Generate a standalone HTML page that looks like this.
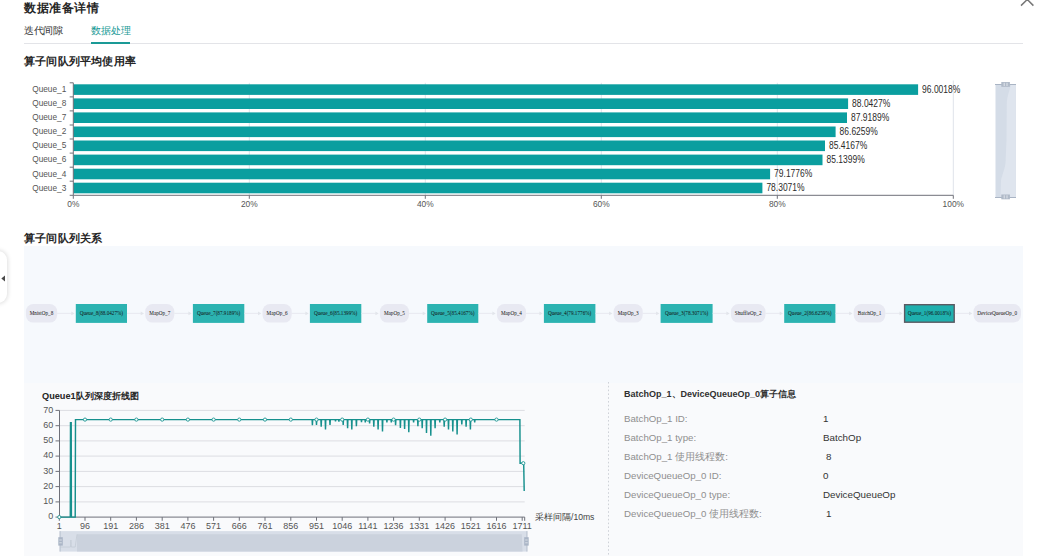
<!DOCTYPE html>
<html><head><meta charset="utf-8">
<style>
html,body{margin:0;padding:0;}
body{width:1049px;height:556px;overflow:hidden;background:#fff;position:relative;font-family:"Liberation Sans",sans-serif;}
.t{position:absolute;white-space:nowrap;line-height:1;}
svg{position:absolute;left:0;top:0;}
svg text{font-family:"Liberation Sans",sans-serif;}
.bl{font-size:10px;fill:#2b2b2b;}
.yl{font-size:9.2px;fill:#555;}
.xl{font-size:8.4px;fill:#555;}
.ll{font-size:9px;fill:#555;}
.nt{font-family:"Liberation Serif",serif !important;font-size:5.2px;fill:#111;}
.row{font-size:9.7px;color:#8f8f8f;}
.val{font-size:9.8px;color:#333;}
</style></head><body>
<div class="t" style="left:24px;top:1.8px;font-size:12px;letter-spacing:0.6px;font-weight:bold;color:#262626;">数据准备详情</div>
<div class="t" style="left:24px;top:25.7px;font-size:10px;letter-spacing:-0.3px;color:#333;">迭代间隙</div>
<div class="t" style="left:91px;top:25.7px;font-size:10px;letter-spacing:0px;color:#1a9a96;">数据处理</div>
<div style="position:absolute;left:24px;top:43px;width:999px;height:1px;background:#e3e4e8;"></div>
<div style="position:absolute;left:91px;top:42px;width:39px;height:2px;background:#1a9a96;"></div>
<div class="t" style="left:24px;top:56px;font-size:11.3px;letter-spacing:0.2px;font-weight:bold;color:#262626;">算子间队列平均使用率</div>
<div class="t" style="left:24px;top:233px;font-size:11.3px;letter-spacing:0.2px;font-weight:bold;color:#262626;">算子间队列关系</div>
<div style="position:absolute;left:23.6px;top:245.8px;width:999.6px;height:137.2px;background:#f6f9fd;"></div>
<div style="position:absolute;left:23.6px;top:383px;width:999.6px;height:173px;background:#f9fafc;"></div>
<div style="position:absolute;left:-12px;top:251px;width:18.5px;height:52px;background:#fff;border-radius:9px;box-shadow:0 0 4px 1px rgba(0,0,0,0.13);"></div>

<div class="t" style="left:42px;top:392px;font-size:9.2px;font-weight:bold;color:#262626;">Queue1队列深度折线图</div>
<div class="t" style="left:624px;top:389.5px;font-size:9px;font-weight:bold;color:#303030;">BatchOp_1、DeviceQueueOp_0算子信息</div>
<div class="t row" style="left:624px;top:414px;">BatchOp_1 ID:</div>
<div class="t row" style="left:624px;top:433px;">BatchOp_1 type:</div>
<div class="t row" style="left:624px;top:452px;">BatchOp_1 使用线程数:</div>
<div class="t row" style="left:624px;top:471px;">DeviceQueueOp_0 ID:</div>
<div class="t row" style="left:624px;top:490px;">DeviceQueueOp_0 type:</div>
<div class="t row" style="left:624px;top:509px;">DeviceQueueOp_0 使用线程数:</div>
<div class="t val" style="left:823px;top:414px;">1</div>
<div class="t val" style="left:823px;top:433px;">BatchOp</div>
<div class="t val" style="left:826px;top:452px;">8</div>
<div class="t val" style="left:823px;top:471px;">0</div>
<div class="t val" style="left:823px;top:490px;">DeviceQueueOp</div>
<div class="t val" style="left:826px;top:509px;">1</div>
<div class="t" style="left:535px;top:512.5px;font-size:8.6px;color:#444;">采样间隔/10ms</div>
<svg width="1049" height="556" viewBox="0 0 1049 556">
<line x1="608.5" y1="382" x2="608.5" y2="556" stroke="#cfd2d8" stroke-width="1" stroke-dasharray="1.6 2.2"/>
<path d="M1021,5.6 L1027.3,-0.5 L1033.4,5.6" fill="none" stroke="#777" stroke-width="1.5"/>
<path d="M1.3,278.5 L5,275.6 L5,281.4 Z" fill="#4a4a4a"/>
<line x1="249.3" y1="82.8" x2="249.3" y2="195.1" stroke="#dfe3ea" stroke-width="1"/>
<line x1="425.3" y1="82.8" x2="425.3" y2="195.1" stroke="#dfe3ea" stroke-width="1"/>
<line x1="601.3" y1="82.8" x2="601.3" y2="195.1" stroke="#dfe3ea" stroke-width="1"/>
<line x1="777.3" y1="82.8" x2="777.3" y2="195.1" stroke="#dfe3ea" stroke-width="1"/>
<line x1="953.3" y1="80.5" x2="953.3" y2="195.1" stroke="#dfe3ea" stroke-width="1"/>
<rect x="73.3" y="84.3" width="844.8" height="10.6" fill="#0a9e9f"/>
<text x="922.1" y="92.6" class="bl" textLength="38.2" lengthAdjust="spacingAndGlyphs">96.0018%</text>
<text x="32.2" y="92.1" class="yl" textLength="34.1" lengthAdjust="spacingAndGlyphs">Queue_1</text>
<rect x="73.3" y="98.4" width="774.8" height="10.6" fill="#0a9e9f"/>
<text x="852.1" y="106.7" class="bl" textLength="38.2" lengthAdjust="spacingAndGlyphs">88.0427%</text>
<text x="32.2" y="106.2" class="yl" textLength="34.1" lengthAdjust="spacingAndGlyphs">Queue_8</text>
<rect x="73.3" y="112.4" width="773.7" height="10.6" fill="#0a9e9f"/>
<text x="851.0" y="120.7" class="bl" textLength="38.2" lengthAdjust="spacingAndGlyphs">87.9189%</text>
<text x="32.2" y="120.2" class="yl" textLength="34.1" lengthAdjust="spacingAndGlyphs">Queue_7</text>
<rect x="73.3" y="126.5" width="762.3" height="10.6" fill="#0a9e9f"/>
<text x="839.6" y="134.8" class="bl" textLength="38.2" lengthAdjust="spacingAndGlyphs">86.6259%</text>
<text x="32.2" y="134.3" class="yl" textLength="34.1" lengthAdjust="spacingAndGlyphs">Queue_2</text>
<rect x="73.3" y="140.5" width="751.7" height="10.6" fill="#0a9e9f"/>
<text x="829.0" y="148.8" class="bl" textLength="38.2" lengthAdjust="spacingAndGlyphs">85.4167%</text>
<text x="32.2" y="148.3" class="yl" textLength="34.1" lengthAdjust="spacingAndGlyphs">Queue_5</text>
<rect x="73.3" y="154.6" width="749.2" height="10.6" fill="#0a9e9f"/>
<text x="826.5" y="162.9" class="bl" textLength="38.2" lengthAdjust="spacingAndGlyphs">85.1399%</text>
<text x="32.2" y="162.4" class="yl" textLength="34.1" lengthAdjust="spacingAndGlyphs">Queue_6</text>
<rect x="73.3" y="168.7" width="696.8" height="10.6" fill="#0a9e9f"/>
<text x="774.1" y="177.0" class="bl" textLength="38.2" lengthAdjust="spacingAndGlyphs">79.1776%</text>
<text x="32.2" y="176.5" class="yl" textLength="34.1" lengthAdjust="spacingAndGlyphs">Queue_4</text>
<rect x="73.3" y="182.7" width="689.1" height="10.6" fill="#0a9e9f"/>
<text x="766.4" y="191.0" class="bl" textLength="38.2" lengthAdjust="spacingAndGlyphs">78.3071%</text>
<text x="32.2" y="190.5" class="yl" textLength="34.1" lengthAdjust="spacingAndGlyphs">Queue_3</text>
<line x1="69.7" y1="82.8" x2="73.3" y2="82.8" stroke="#6e7079" stroke-width="1"/>
<line x1="69.7" y1="96.9" x2="73.3" y2="96.9" stroke="#6e7079" stroke-width="1"/>
<line x1="69.7" y1="110.9" x2="73.3" y2="110.9" stroke="#6e7079" stroke-width="1"/>
<line x1="69.7" y1="125.0" x2="73.3" y2="125.0" stroke="#6e7079" stroke-width="1"/>
<line x1="69.7" y1="139.0" x2="73.3" y2="139.0" stroke="#6e7079" stroke-width="1"/>
<line x1="69.7" y1="153.1" x2="73.3" y2="153.1" stroke="#6e7079" stroke-width="1"/>
<line x1="69.7" y1="167.2" x2="73.3" y2="167.2" stroke="#6e7079" stroke-width="1"/>
<line x1="69.7" y1="181.2" x2="73.3" y2="181.2" stroke="#6e7079" stroke-width="1"/>
<line x1="69.7" y1="195.3" x2="73.3" y2="195.3" stroke="#6e7079" stroke-width="1"/>
<line x1="73.3" y1="195.3" x2="73.3" y2="198.8" stroke="#6e7079" stroke-width="1"/>
<text x="73.3" y="207.3" class="xl" text-anchor="middle">0%</text>
<line x1="249.3" y1="195.3" x2="249.3" y2="198.8" stroke="#6e7079" stroke-width="1"/>
<text x="249.3" y="207.3" class="xl" text-anchor="middle">20%</text>
<line x1="425.3" y1="195.3" x2="425.3" y2="198.8" stroke="#6e7079" stroke-width="1"/>
<text x="425.3" y="207.3" class="xl" text-anchor="middle">40%</text>
<line x1="601.3" y1="195.3" x2="601.3" y2="198.8" stroke="#6e7079" stroke-width="1"/>
<text x="601.3" y="207.3" class="xl" text-anchor="middle">60%</text>
<line x1="777.3" y1="195.3" x2="777.3" y2="198.8" stroke="#6e7079" stroke-width="1"/>
<text x="777.3" y="207.3" class="xl" text-anchor="middle">80%</text>
<line x1="953.3" y1="195.3" x2="953.3" y2="198.8" stroke="#6e7079" stroke-width="1"/>
<text x="953.3" y="207.3" class="xl" text-anchor="middle">100%</text>
<line x1="73.3" y1="82.8" x2="73.3" y2="195.3" stroke="#6e7079" stroke-width="1"/>
<line x1="73.3" y1="195.3" x2="953.3" y2="195.3" stroke="#6e7079" stroke-width="1"/>
<rect x="995.5" y="84.5" width="20.4" height="113" fill="#d4dce7"/>
<path d="M1011,84.5 L1015.9,84.5 L1015.9,197.5 L1000.5,197.5 L1001,180 C1003,172 1005.5,168 1005.7,160 L1006.5,140 L1006.8,104 C1007,95 1010,90 1011,84.5 Z" fill="#dfe5ee"/>
<line x1="995" y1="84.5" x2="1016" y2="84.5" stroke="#a9b4c4" stroke-width="1"/>
<line x1="995" y1="197.5" x2="1016" y2="197.5" stroke="#a9b4c4" stroke-width="1"/>
<rect x="1001.3" y="82" width="8.6" height="4.8" fill="#b0bac8"/>
<line x1="1004.2" y1="82.8" x2="1004.2" y2="86" stroke="#e6eaf0" stroke-width="0.9"/>
<line x1="1007" y1="82.8" x2="1007" y2="86" stroke="#e6eaf0" stroke-width="0.9"/>
<rect x="1001.3" y="194.5" width="8.6" height="4.8" fill="#b0bac8"/>
<line x1="1004.2" y1="195.3" x2="1004.2" y2="198.5" stroke="#e6eaf0" stroke-width="0.9"/>
<line x1="1007" y1="195.3" x2="1007" y2="198.5" stroke="#e6eaf0" stroke-width="0.9"/>
<rect x="25.9" y="304" width="31.3" height="18.6" rx="7.5" fill="#e8e9f2"/>
<text x="41.5" y="314.9" class="nt" text-anchor="middle">MnistOp_8</text>
<line x1="57.2" y1="313.4" x2="72.8" y2="313.4" stroke="#e4e6ec" stroke-width="0.8"/>
<path d="M71.3,311.6 L74.6,313.4 L71.3,315.2 Z" fill="#e2e5eb"/>
<rect x="75.8" y="304" width="51.2" height="18.9" fill="#2cb3b1"/>
<text x="101.4" y="314.6" class="nt" text-anchor="middle">Queue_8(88.0427%)</text>
<line x1="127.0" y1="313.4" x2="142.2" y2="313.4" stroke="#e4e6ec" stroke-width="0.8"/>
<path d="M140.7,311.6 L144.0,313.4 L140.7,315.2 Z" fill="#e2e5eb"/>
<rect x="145.2" y="304" width="29.1" height="18.6" rx="7.5" fill="#e8e9f2"/>
<text x="159.8" y="314.9" class="nt" text-anchor="middle">MapOp_7</text>
<line x1="174.3" y1="313.4" x2="189.9" y2="313.4" stroke="#e4e6ec" stroke-width="0.8"/>
<path d="M188.4,311.6 L191.7,313.4 L188.4,315.2 Z" fill="#e2e5eb"/>
<rect x="192.9" y="304" width="51.4" height="18.9" fill="#2cb3b1"/>
<text x="218.6" y="314.6" class="nt" text-anchor="middle">Queue_7(87.9189%)</text>
<line x1="244.3" y1="313.4" x2="259.5" y2="313.4" stroke="#e4e6ec" stroke-width="0.8"/>
<path d="M258.0,311.6 L261.3,313.4 L258.0,315.2 Z" fill="#e2e5eb"/>
<rect x="262.5" y="304" width="29.2" height="18.6" rx="7.5" fill="#e8e9f2"/>
<text x="277.1" y="314.9" class="nt" text-anchor="middle">MapOp_6</text>
<line x1="291.7" y1="313.4" x2="306.9" y2="313.4" stroke="#e4e6ec" stroke-width="0.8"/>
<path d="M305.4,311.6 L308.7,313.4 L305.4,315.2 Z" fill="#e2e5eb"/>
<rect x="309.9" y="304" width="51.4" height="18.9" fill="#2cb3b1"/>
<text x="335.6" y="314.6" class="nt" text-anchor="middle">Queue_6(85.1399%)</text>
<line x1="361.3" y1="313.4" x2="376.9" y2="313.4" stroke="#e4e6ec" stroke-width="0.8"/>
<path d="M375.4,311.6 L378.7,313.4 L375.4,315.2 Z" fill="#e2e5eb"/>
<rect x="379.9" y="304" width="29.1" height="18.6" rx="7.5" fill="#e8e9f2"/>
<text x="394.4" y="314.9" class="nt" text-anchor="middle">MapOp_5</text>
<line x1="409.0" y1="313.4" x2="424.2" y2="313.4" stroke="#e4e6ec" stroke-width="0.8"/>
<path d="M422.7,311.6 L426.0,313.4 L422.7,315.2 Z" fill="#e2e5eb"/>
<rect x="427.2" y="304" width="51.1" height="18.9" fill="#2cb3b1"/>
<text x="452.8" y="314.6" class="nt" text-anchor="middle">Queue_5(85.4167%)</text>
<line x1="478.3" y1="313.4" x2="493.9" y2="313.4" stroke="#e4e6ec" stroke-width="0.8"/>
<path d="M492.4,311.6 L495.7,313.4 L492.4,315.2 Z" fill="#e2e5eb"/>
<rect x="496.9" y="304" width="29.1" height="18.6" rx="7.5" fill="#e8e9f2"/>
<text x="511.4" y="314.9" class="nt" text-anchor="middle">MapOp_4</text>
<line x1="526.0" y1="313.4" x2="540.9" y2="313.4" stroke="#e4e6ec" stroke-width="0.8"/>
<path d="M539.4,311.6 L542.7,313.4 L539.4,315.2 Z" fill="#e2e5eb"/>
<rect x="543.9" y="304" width="51.5" height="18.9" fill="#2cb3b1"/>
<text x="569.6" y="314.6" class="nt" text-anchor="middle">Queue_4(79.1776%)</text>
<line x1="595.4" y1="313.4" x2="610.6" y2="313.4" stroke="#e4e6ec" stroke-width="0.8"/>
<path d="M609.1,311.6 L612.4,313.4 L609.1,315.2 Z" fill="#e2e5eb"/>
<rect x="613.6" y="304" width="29.1" height="18.6" rx="7.5" fill="#e8e9f2"/>
<text x="628.2" y="314.9" class="nt" text-anchor="middle">MapOp_3</text>
<line x1="642.7" y1="313.4" x2="657.6" y2="313.4" stroke="#e4e6ec" stroke-width="0.8"/>
<path d="M656.1,311.6 L659.4,313.4 L656.1,315.2 Z" fill="#e2e5eb"/>
<rect x="660.6" y="304" width="52.0" height="18.9" fill="#2cb3b1"/>
<text x="686.6" y="314.6" class="nt" text-anchor="middle">Queue_3(78.3071%)</text>
<line x1="712.6" y1="313.4" x2="727.9" y2="313.4" stroke="#e4e6ec" stroke-width="0.8"/>
<path d="M726.4,311.6 L729.7,313.4 L726.4,315.2 Z" fill="#e2e5eb"/>
<rect x="730.9" y="304" width="34.6" height="18.6" rx="7.5" fill="#e8e9f2"/>
<text x="748.2" y="314.9" class="nt" text-anchor="middle">ShuffleOp_2</text>
<line x1="765.5" y1="313.4" x2="781.2" y2="313.4" stroke="#e4e6ec" stroke-width="0.8"/>
<path d="M779.7,311.6 L783.0,313.4 L779.7,315.2 Z" fill="#e2e5eb"/>
<rect x="784.2" y="304" width="51.2" height="18.9" fill="#2cb3b1"/>
<text x="809.8" y="314.6" class="nt" text-anchor="middle">Queue_2(86.6259%)</text>
<line x1="835.4" y1="313.4" x2="850.7" y2="313.4" stroke="#e4e6ec" stroke-width="0.8"/>
<path d="M849.2,311.6 L852.5,313.4 L849.2,315.2 Z" fill="#e2e5eb"/>
<rect x="853.7" y="304" width="31.6" height="18.6" rx="7.5" fill="#e8e9f2"/>
<text x="869.5" y="314.9" class="nt" text-anchor="middle">BatchOp_1</text>
<line x1="885.3" y1="313.4" x2="900.9" y2="313.4" stroke="#e4e6ec" stroke-width="0.8"/>
<path d="M899.4,311.6 L902.7,313.4 L899.4,315.2 Z" fill="#e2e5eb"/>
<rect x="904.6" y="304.7" width="49.6" height="17.5" fill="#1fb0ae" stroke="#5b5a62" stroke-width="1.4"/>
<text x="929.4" y="314.6" class="nt" text-anchor="middle">Queue_1(96.0018%)</text>
<line x1="954.9" y1="313.4" x2="970.5" y2="313.4" stroke="#e4e6ec" stroke-width="0.8"/>
<path d="M969.0,311.6 L972.3,313.4 L969.0,315.2 Z" fill="#e2e5eb"/>
<rect x="973.5" y="304" width="47.5" height="18.6" rx="7.5" fill="#e8e9f2"/>
<text x="997.2" y="314.9" class="nt" text-anchor="middle">DeviceQueueOp_0</text>
<line x1="55.5" y1="517.1" x2="59.5" y2="517.1" stroke="#6e7079" stroke-width="1"/>
<text x="53.3" y="519.3" class="ll" text-anchor="end">0</text>
<line x1="59.5" y1="501.9" x2="524.7" y2="501.9" stroke="#dcdde2" stroke-width="1"/>
<line x1="55.5" y1="501.9" x2="59.5" y2="501.9" stroke="#6e7079" stroke-width="1"/>
<text x="53.3" y="504.1" class="ll" text-anchor="end">10</text>
<line x1="59.5" y1="486.6" x2="524.7" y2="486.6" stroke="#dcdde2" stroke-width="1"/>
<line x1="55.5" y1="486.6" x2="59.5" y2="486.6" stroke="#6e7079" stroke-width="1"/>
<text x="53.3" y="488.8" class="ll" text-anchor="end">20</text>
<line x1="59.5" y1="471.4" x2="524.7" y2="471.4" stroke="#dcdde2" stroke-width="1"/>
<line x1="55.5" y1="471.4" x2="59.5" y2="471.4" stroke="#6e7079" stroke-width="1"/>
<text x="53.3" y="473.6" class="ll" text-anchor="end">30</text>
<line x1="59.5" y1="456.1" x2="524.7" y2="456.1" stroke="#dcdde2" stroke-width="1"/>
<line x1="55.5" y1="456.1" x2="59.5" y2="456.1" stroke="#6e7079" stroke-width="1"/>
<text x="53.3" y="458.3" class="ll" text-anchor="end">40</text>
<line x1="59.5" y1="440.9" x2="524.7" y2="440.9" stroke="#dcdde2" stroke-width="1"/>
<line x1="55.5" y1="440.9" x2="59.5" y2="440.9" stroke="#6e7079" stroke-width="1"/>
<text x="53.3" y="443.1" class="ll" text-anchor="end">50</text>
<line x1="59.5" y1="425.7" x2="524.7" y2="425.7" stroke="#dcdde2" stroke-width="1"/>
<line x1="55.5" y1="425.7" x2="59.5" y2="425.7" stroke="#6e7079" stroke-width="1"/>
<text x="53.3" y="427.9" class="ll" text-anchor="end">60</text>
<line x1="59.5" y1="410.4" x2="524.7" y2="410.4" stroke="#dcdde2" stroke-width="1"/>
<line x1="55.5" y1="410.4" x2="59.5" y2="410.4" stroke="#6e7079" stroke-width="1"/>
<text x="53.3" y="412.6" class="ll" text-anchor="end">70</text>
<line x1="59.3" y1="517.1" x2="59.3" y2="520.8" stroke="#6e7079" stroke-width="1"/>
<text x="59.3" y="528.8" class="ll" text-anchor="middle">1</text>
<line x1="85.0" y1="517.1" x2="85.0" y2="520.8" stroke="#6e7079" stroke-width="1"/>
<text x="85.0" y="528.8" class="ll" text-anchor="middle">96</text>
<line x1="110.7" y1="517.1" x2="110.7" y2="520.8" stroke="#6e7079" stroke-width="1"/>
<text x="110.7" y="528.8" class="ll" text-anchor="middle">191</text>
<line x1="136.4" y1="517.1" x2="136.4" y2="520.8" stroke="#6e7079" stroke-width="1"/>
<text x="136.4" y="528.8" class="ll" text-anchor="middle">286</text>
<line x1="162.2" y1="517.1" x2="162.2" y2="520.8" stroke="#6e7079" stroke-width="1"/>
<text x="162.2" y="528.8" class="ll" text-anchor="middle">381</text>
<line x1="187.9" y1="517.1" x2="187.9" y2="520.8" stroke="#6e7079" stroke-width="1"/>
<text x="187.9" y="528.8" class="ll" text-anchor="middle">476</text>
<line x1="213.6" y1="517.1" x2="213.6" y2="520.8" stroke="#6e7079" stroke-width="1"/>
<text x="213.6" y="528.8" class="ll" text-anchor="middle">571</text>
<line x1="239.3" y1="517.1" x2="239.3" y2="520.8" stroke="#6e7079" stroke-width="1"/>
<text x="239.3" y="528.8" class="ll" text-anchor="middle">666</text>
<line x1="265.0" y1="517.1" x2="265.0" y2="520.8" stroke="#6e7079" stroke-width="1"/>
<text x="265.0" y="528.8" class="ll" text-anchor="middle">761</text>
<line x1="290.8" y1="517.1" x2="290.8" y2="520.8" stroke="#6e7079" stroke-width="1"/>
<text x="290.8" y="528.8" class="ll" text-anchor="middle">856</text>
<line x1="316.5" y1="517.1" x2="316.5" y2="520.8" stroke="#6e7079" stroke-width="1"/>
<text x="316.5" y="528.8" class="ll" text-anchor="middle">951</text>
<line x1="342.2" y1="517.1" x2="342.2" y2="520.8" stroke="#6e7079" stroke-width="1"/>
<text x="342.2" y="528.8" class="ll" text-anchor="middle">1046</text>
<line x1="367.9" y1="517.1" x2="367.9" y2="520.8" stroke="#6e7079" stroke-width="1"/>
<text x="367.9" y="528.8" class="ll" text-anchor="middle">1141</text>
<line x1="393.6" y1="517.1" x2="393.6" y2="520.8" stroke="#6e7079" stroke-width="1"/>
<text x="393.6" y="528.8" class="ll" text-anchor="middle">1236</text>
<line x1="419.3" y1="517.1" x2="419.3" y2="520.8" stroke="#6e7079" stroke-width="1"/>
<text x="419.3" y="528.8" class="ll" text-anchor="middle">1331</text>
<line x1="445.1" y1="517.1" x2="445.1" y2="520.8" stroke="#6e7079" stroke-width="1"/>
<text x="445.1" y="528.8" class="ll" text-anchor="middle">1426</text>
<line x1="470.8" y1="517.1" x2="470.8" y2="520.8" stroke="#6e7079" stroke-width="1"/>
<text x="470.8" y="528.8" class="ll" text-anchor="middle">1521</text>
<line x1="496.5" y1="517.1" x2="496.5" y2="520.8" stroke="#6e7079" stroke-width="1"/>
<text x="496.5" y="528.8" class="ll" text-anchor="middle">1616</text>
<line x1="522.2" y1="517.1" x2="522.2" y2="520.8" stroke="#6e7079" stroke-width="1"/>
<text x="522.2" y="528.8" class="ll" text-anchor="middle">1711</text>
<line x1="524.7" y1="517.1" x2="524.7" y2="520.8" stroke="#6e7079" stroke-width="1"/>
<line x1="59.5" y1="410.4" x2="59.5" y2="517.1" stroke="#6e7079" stroke-width="1"/>
<line x1="59.5" y1="517.1" x2="524.7" y2="517.1" stroke="#6e7079" stroke-width="1"/>
<path d="M59.3,517.1 L70.3,517.1 L70.5,422.6 L71.2,422.6 L71.4,517.1 L75.2,517.1 L75.5,419.6 L312.1,419.6 L312.4,425.2 L312.7,419.6 L316.2,419.6 L316.5,425.0 L316.8,419.6 L320.9,419.6 L321.2,426.6 L321.5,419.6 L325.2,419.6 L325.5,429.4 L325.8,419.6 L329.7,419.6 L330.0,425.0 L330.3,419.6 L335.2,419.6 L335.5,421.5 L335.8,419.6 L338.6,419.6 L338.9,421.6 L339.2,419.6 L342.9,419.6 L343.2,425.0 L343.5,419.6 L347.3,419.6 L347.6,428.1 L347.9,419.6 L351.5,419.6 L351.8,429.4 L352.1,419.6 L356.1,419.6 L356.4,426.3 L356.7,419.6 L361.2,419.6 L361.5,422.2 L361.8,419.6 L365.0,419.6 L365.3,422.5 L365.6,419.6 L369.3,419.6 L369.6,423.5 L369.9,419.6 L373.5,419.6 L373.8,426.6 L374.1,419.6 L377.8,419.6 L378.1,429.4 L378.4,419.6 L382.2,419.6 L382.5,431.4 L382.8,419.6 L386.6,419.6 L386.9,422.4 L387.2,419.6 L391.0,419.6 L391.3,422.4 L391.6,419.6 L395.3,419.6 L395.6,425.2 L395.9,419.6 L400.1,419.6 L400.4,427.9 L400.7,419.6 L404.3,419.6 L404.6,429.0 L404.9,419.6 L408.5,419.6 L408.8,432.3 L409.1,419.6 L413.3,419.6 L413.6,422.4 L413.9,419.6 L417.6,419.6 L417.9,426.2 L418.2,419.6 L421.9,419.6 L422.2,428.1 L422.5,419.6 L426.2,419.6 L426.5,432.9 L426.8,419.6 L430.5,419.6 L430.8,435.7 L431.1,419.6 L434.8,419.6 L435.1,428.1 L435.4,419.6 L439.5,419.6 L439.8,422.4 L440.1,419.6 L443.9,419.6 L444.2,426.8 L444.5,419.6 L448.2,419.6 L448.5,429.6 L448.8,419.6 L452.5,419.6 L452.8,431.4 L453.1,419.6 L456.8,419.6 L457.1,434.4 L457.4,419.6 L461.5,419.6 L461.8,424.4 L462.1,419.6 L465.8,419.6 L466.1,426.7 L466.4,419.6 L470.1,419.6 L470.4,429.6 L470.7,419.6 L474.4,419.6 L474.7,422.4 L475.0,419.6 L519.9,419.6 L520.1,463.2 L523.7,463.2 L524.2,491.0" fill="none" stroke="#16908d" stroke-width="1.45" stroke-linejoin="miter"/>
<circle cx="59.3" cy="517.1" r="1.6" fill="#fff" stroke="#1a9592" stroke-width="0.9"/>
<circle cx="85.0" cy="419.6" r="1.6" fill="#fff" stroke="#1a9592" stroke-width="0.9"/>
<circle cx="110.7" cy="419.6" r="1.6" fill="#fff" stroke="#1a9592" stroke-width="0.9"/>
<circle cx="136.4" cy="419.6" r="1.6" fill="#fff" stroke="#1a9592" stroke-width="0.9"/>
<circle cx="162.2" cy="419.6" r="1.6" fill="#fff" stroke="#1a9592" stroke-width="0.9"/>
<circle cx="187.9" cy="419.6" r="1.6" fill="#fff" stroke="#1a9592" stroke-width="0.9"/>
<circle cx="213.6" cy="419.6" r="1.6" fill="#fff" stroke="#1a9592" stroke-width="0.9"/>
<circle cx="239.3" cy="419.6" r="1.6" fill="#fff" stroke="#1a9592" stroke-width="0.9"/>
<circle cx="265.0" cy="419.6" r="1.6" fill="#fff" stroke="#1a9592" stroke-width="0.9"/>
<circle cx="290.8" cy="419.6" r="1.6" fill="#fff" stroke="#1a9592" stroke-width="0.9"/>
<circle cx="316.5" cy="419.6" r="1.6" fill="#fff" stroke="#1a9592" stroke-width="0.9"/>
<circle cx="342.2" cy="419.6" r="1.6" fill="#fff" stroke="#1a9592" stroke-width="0.9"/>
<circle cx="367.9" cy="419.6" r="1.6" fill="#fff" stroke="#1a9592" stroke-width="0.9"/>
<circle cx="393.6" cy="419.6" r="1.6" fill="#fff" stroke="#1a9592" stroke-width="0.9"/>
<circle cx="419.3" cy="419.6" r="1.6" fill="#fff" stroke="#1a9592" stroke-width="0.9"/>
<circle cx="445.1" cy="419.6" r="1.6" fill="#fff" stroke="#1a9592" stroke-width="0.9"/>
<circle cx="470.8" cy="419.6" r="1.6" fill="#fff" stroke="#1a9592" stroke-width="0.9"/>
<circle cx="496.5" cy="419.6" r="1.6" fill="#fff" stroke="#1a9592" stroke-width="0.9"/>
<circle cx="523.3" cy="463.2" r="1.6" fill="#fff" stroke="#1a9592" stroke-width="0.9"/>
<rect x="60" y="531.1" width="467" height="20.5" fill="#d8dee8"/>
<path d="M77,534.3 L521.8,534.3 L522.5,551.6 L77,551.6 Z" fill="#cbd2dd"/>
<path d="M60.5,547 L70.5,547 L70.9,540 L71.3,547 L75.2,547 L77,534.3" fill="none" stroke="#c4cbd6" stroke-width="0.8"/>
<line x1="60" y1="531.1" x2="60" y2="551.6" stroke="#aeb8c7" stroke-width="0.9"/>
<line x1="527" y1="531.1" x2="527" y2="551.6" stroke="#aeb8c7" stroke-width="0.9"/>
<rect x="58.3" y="537.2" width="4.5" height="8.4" fill="#aab5c6"/>
<line x1="59.3" y1="540" x2="61.8" y2="540" stroke="#e4e8ee" stroke-width="0.8"/>
<line x1="59.3" y1="542.8" x2="61.8" y2="542.8" stroke="#e4e8ee" stroke-width="0.8"/>
<rect x="524.2" y="537.2" width="4.5" height="8.4" fill="#aab5c6"/>
<line x1="525.2" y1="540" x2="527.7" y2="540" stroke="#e4e8ee" stroke-width="0.8"/>
<line x1="525.2" y1="542.8" x2="527.7" y2="542.8" stroke="#e4e8ee" stroke-width="0.8"/>
</svg>
</body></html>
